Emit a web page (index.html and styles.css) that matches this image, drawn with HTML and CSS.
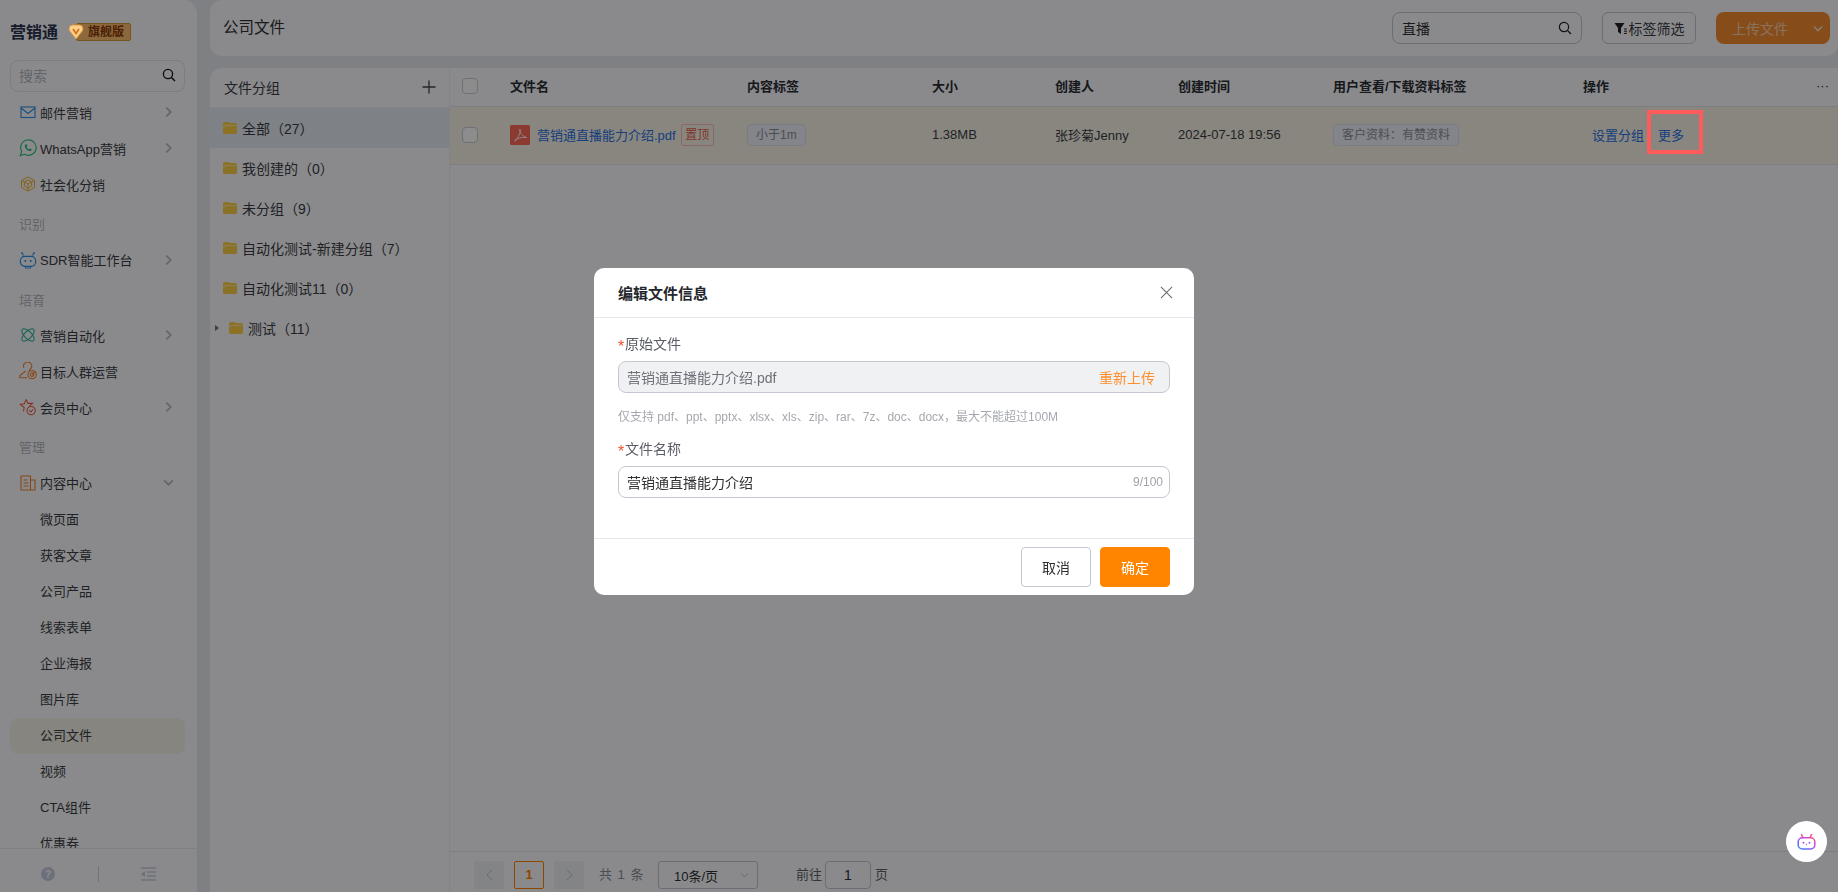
FILE: index.html
```html
<!DOCTYPE html>
<html lang="zh-CN">
<head>
<meta charset="utf-8">
<title>公司文件</title>
<link rel="stylesheet" href="styles.css">
</head>
<body>
<div class="app">
  <aside class="sidebar">
    <div class="brand">
      <span class="brand-name">营销通</span>
      <span class="badge">
        <svg class="badge-icon" viewBox="0 0 16 16"><path d="M1 5 Q1 1 4.5 1 H11.5 Q15 1 15 5 Q15 6.5 13.5 8 L8 15 L2.5 8 Q1 6.5 1 5 Z" fill="#ffcf8c" stroke="#d9983f"/><path d="M5 5 L8 9.5 L11 5" fill="none" stroke="#d0741f" stroke-width="1.8"/></svg>
        <span class="badge-text">旗舰版</span>
      </span>
    </div>
    <div class="side-search">
      <span class="side-search-text">搜索</span>
      <svg class="ico-search" viewBox="0 0 14 14"><circle cx="6" cy="6" r="4.6" fill="none" stroke="#111" stroke-width="1.3"/><path d="M9.5 9.5 L13 13" stroke="#111" stroke-width="1.4"/></svg>
    </div>
    <nav class="menu">
      <a class="item">
        <svg class="ico" viewBox="0 0 16 16"><rect x="1" y="3" width="14" height="10.5" fill="none" stroke="#2a8fea" stroke-width="1.1"/><path d="M1 4 L8 9.5 L15 4" fill="none" stroke="#2a8fea" stroke-width="1.1"/></svg>
        <span class="label">邮件营销</span><svg class="chev" viewBox="0 0 8 12"><path d="M1.5 1 L6.5 6 L1.5 11" fill="none" stroke="#b4b8c4" stroke-width="2"/></svg>
      </a>
      <a class="item">
        <svg class="ico ico-big" viewBox="0 0 20 20"><path d="M1.5 18.5 L3 13.8 A8.6 8.6 0 1 1 6.2 17 Z" fill="none" stroke="#2fc27a" stroke-width="1.3"/><path d="M7 6 C6 7 6.2 9 8 11 C10 13 12.2 14 13.5 13 L14.2 11.8 L12.2 10.6 L11.2 11.5 C10 11 9 10 8.6 8.8 L9.4 7.8 L8.3 5.8 Z" fill="#2fc27a"/></svg>
        <span class="label">WhatsApp营销</span><svg class="chev" viewBox="0 0 8 12"><path d="M1.5 1 L6.5 6 L1.5 11" fill="none" stroke="#b4b8c4" stroke-width="2"/></svg>
      </a>
      <a class="item">
        <svg class="ico" viewBox="0 0 16 16"><path d="M8 1 L14.5 4.5 V11.5 L8 15 L1.5 11.5 V4.5 Z M8 4 L11.6 6 V10 L8 12 L4.4 10 V6 Z M1.5 4.5 L8 8 L14.5 4.5 M8 8 V15" fill="none" stroke="#f5b02e" stroke-width="1"/></svg>
        <span class="label">社会化分销</span>
      </a>
      <div class="section">识别</div>
      <a class="item">
        <svg class="ico ico-big" viewBox="0 0 20 20"><rect x="1.5" y="6" width="17" height="11" rx="5" fill="none" stroke="#2a8fea" stroke-width="1.3"/><path d="M5 5 L3.5 2.5 M15 5 L16.5 2.5" stroke="#2a8fea" stroke-width="1.3"/><circle cx="3.3" cy="2" r="1" fill="#2a8fea"/><circle cx="16.7" cy="2" r="1" fill="#2a8fea"/><circle cx="7" cy="11" r="1.1" fill="#2a8fea"/><circle cx="13" cy="11" r="1.1" fill="#2a8fea"/><path d="M7 17 V19 H13 V17" fill="none" stroke="#2a8fea"/></svg>
        <span class="label">SDR智能工作台</span><svg class="chev" viewBox="0 0 8 12"><path d="M1.5 1 L6.5 6 L1.5 11" fill="none" stroke="#b4b8c4" stroke-width="2"/></svg>
      </a>
      <div class="section">培育</div>
      <a class="item">
        <svg class="ico" viewBox="0 0 16 16"><g fill="none" stroke="#2fb59b" stroke-width="1.1"><ellipse cx="8" cy="8" rx="8" ry="3.6" transform="rotate(45 8 8)"/><ellipse cx="8" cy="8" rx="8" ry="3.6" transform="rotate(-45 8 8)"/></g></svg>
        <span class="label">营销自动化</span><svg class="chev" viewBox="0 0 8 12"><path d="M1.5 1 L6.5 6 L1.5 11" fill="none" stroke="#b4b8c4" stroke-width="2"/></svg>
      </a>
      <a class="item">
        <svg class="ico ico-big" viewBox="0 0 20 20"><g fill="none" stroke="#f0822d" stroke-width="1.2"><path d="M5.5 6.5 A4.5 4.5 0 1 1 12.5 8 L11 10.5 M7.5 10 L1 15 V17.5 H9"/><circle cx="14.5" cy="14" r="4.6"/><circle cx="14.5" cy="14" r="2"/><path d="M14.5 14 L18 10.5"/></g></svg>
        <span class="label">目标人群运营</span>
      </a>
      <a class="item">
        <svg class="ico ico-big" viewBox="0 0 20 20"><g fill="none" stroke="#ee5a40" stroke-width="1.2"><path d="M8 1.5 L10 6 H15 L11.5 9 M5 15 L5.8 10.6 L1.5 7 L6 6.3 L8 1.5"/><circle cx="13.5" cy="14" r="4.6"/><path d="M11.3 13.6 L13.2 15.6 L15.8 12.5"/></g></svg>
        <span class="label">会员中心</span><svg class="chev" viewBox="0 0 8 12"><path d="M1.5 1 L6.5 6 L1.5 11" fill="none" stroke="#b4b8c4" stroke-width="2"/></svg>
      </a>
      <div class="section">管理</div>
      <a class="item">
        <svg class="ico" viewBox="0 0 16 16"><g fill="none" stroke="#f0822d" stroke-width="1.1"><path d="M1 1 H10.5 V15 H1 Z M10.5 5 H15 V15 H10.5"/><path d="M3.5 5 H7.5 M3.5 8 H8.5 M3.5 11 H8.5"/></g></svg>
        <span class="label">内容中心</span><svg class="chev chev-down" viewBox="0 0 12 8"><path d="M1 1.5 L6 6.5 L11 1.5" fill="none" stroke="#b4b8c4" stroke-width="2"/></svg>
      </a>
      <a class="item sub">微页面</a>
      <a class="item sub">获客文章</a>
      <a class="item sub">公司产品</a>
      <a class="item sub">线索表单</a>
      <a class="item sub">企业海报</a>
      <a class="item sub">图片库</a>
      <a class="item sub current">公司文件</a>
      <a class="item sub">视频</a>
      <a class="item sub">CTA组件</a>
      <a class="item sub">优惠券</a>
    </nav>
    <div class="side-foot">
      <svg class="foot-help" viewBox="0 0 14 14"><circle cx="7" cy="7" r="7" fill="#c7cde0"/><text x="7" y="11" text-anchor="middle" class="foot-q">?</text></svg>
      <span class="foot-sep"></span>
      <svg class="foot-fold" viewBox="0 0 15 14"><path d="M0 1 H15 M6 5 H15 M6 9 H15 M0 13 H15" stroke="#c7cde0" stroke-width="1.6"/><path d="M4 4 V10 L0 7 Z" fill="#c7cde0"/></svg>
    </div>
  </aside>

  <main class="main">
    <header class="topbar">
      <h1 class="title">公司文件</h1>
      <div class="top-actions">
        <div class="top-search">
          <span>直播</span>
          <svg class="ico-search" viewBox="0 0 14 14"><circle cx="6" cy="6" r="4.6" fill="none" stroke="#222" stroke-width="1.2"/><path d="M9.5 9.5 L13 13" stroke="#222" stroke-width="1.3"/></svg>
        </div>
        <button class="filter-btn">
          <svg class="filter-ico" viewBox="0 0 14 13"><path d="M0.5 1 H10.5 L7 6 V12 L4 10 V6 Z" fill="#222"/><path d="M10 7 H13 M10 9.2 H13 M10 11.4 H13" stroke="#222"/></svg>
          标签筛选
        </button>
        <button class="upload-btn">
          <span>上传文件</span>
          <svg class="upload-chev" viewBox="0 0 12 8"><path d="M1 1.5 L6 6.5 L11 1.5" fill="none" stroke="#fff" stroke-width="1.8"/></svg>
        </button>
      </div>
    </header>

    <section class="panel">
      <div class="groups">
        <div class="groups-head">
          <span>文件分组</span>
          <svg class="plus" viewBox="0 0 14 14"><path d="M7 0.5 V13.5 M0.5 7 H13.5" stroke="#444" stroke-width="1.3"/></svg>
        </div>
        <div class="group active"><svg class="folder" viewBox="0 0 14 12"><path d="M0 2 Q0 0 2 0 H5.5 L7 1 H12.5 Q14 1 14 2.5 V10.5 Q14 12 12.5 12 H1.5 Q0 12 0 10.5 Z" fill="#ffcf45"/><path d="M1 6 V4.5 Q1 3.5 2 3.5 H13.5" fill="none" stroke="#ffe9a8"/></svg>全部（27）</div>
        <div class="group"><svg class="folder" viewBox="0 0 14 12"><path d="M0 2 Q0 0 2 0 H5.5 L7 1 H12.5 Q14 1 14 2.5 V10.5 Q14 12 12.5 12 H1.5 Q0 12 0 10.5 Z" fill="#ffcf45"/><path d="M1 6 V4.5 Q1 3.5 2 3.5 H13.5" fill="none" stroke="#ffe9a8"/></svg>我创建的（0）</div>
        <div class="group"><svg class="folder" viewBox="0 0 14 12"><path d="M0 2 Q0 0 2 0 H5.5 L7 1 H12.5 Q14 1 14 2.5 V10.5 Q14 12 12.5 12 H1.5 Q0 12 0 10.5 Z" fill="#ffcf45"/><path d="M1 6 V4.5 Q1 3.5 2 3.5 H13.5" fill="none" stroke="#ffe9a8"/></svg>未分组（9）</div>
        <div class="group"><svg class="folder" viewBox="0 0 14 12"><path d="M0 2 Q0 0 2 0 H5.5 L7 1 H12.5 Q14 1 14 2.5 V10.5 Q14 12 12.5 12 H1.5 Q0 12 0 10.5 Z" fill="#ffcf45"/><path d="M1 6 V4.5 Q1 3.5 2 3.5 H13.5" fill="none" stroke="#ffe9a8"/></svg>自动化测试-新建分组（7）</div>
        <div class="group"><svg class="folder" viewBox="0 0 14 12"><path d="M0 2 Q0 0 2 0 H5.5 L7 1 H12.5 Q14 1 14 2.5 V10.5 Q14 12 12.5 12 H1.5 Q0 12 0 10.5 Z" fill="#ffcf45"/><path d="M1 6 V4.5 Q1 3.5 2 3.5 H13.5" fill="none" stroke="#ffe9a8"/></svg>自动化测试11（0）</div>
        <div class="group nested"><span class="caret"></span><svg class="folder" viewBox="0 0 14 12"><path d="M0 2 Q0 0 2 0 H5.5 L7 1 H12.5 Q14 1 14 2.5 V10.5 Q14 12 12.5 12 H1.5 Q0 12 0 10.5 Z" fill="#ffcf45"/><path d="M1 6 V4.5 Q1 3.5 2 3.5 H13.5" fill="none" stroke="#ffe9a8"/></svg>测试（11）</div>
      </div>

      <div class="table-wrap">
        <div class="table">
          <div class="row head">
            <div class="cell"><span class="check"></span></div>
            <div class="cell">文件名</div>
            <div class="cell">内容标签</div>
            <div class="cell">大小</div>
            <div class="cell">创建人</div>
            <div class="cell">创建时间</div>
            <div class="cell">用户查看/下载资料标签</div>
            <div class="cell">操作</div>
            <div class="cell dots">···</div>
          </div>
          <div class="row body">
            <div class="cell"><span class="check"></span></div>
            <div class="cell file">
              <svg class="pdf" viewBox="0 0 20 20"><rect width="20" height="20" rx="1.5" fill="#ff6a5a"/><path d="M10 4 C10.5 8 9 12 4.5 16 M10 4 C9.5 8 12.5 11.5 16.5 12.5 M4.5 16 C7.5 13 12 12 16.5 12.5" fill="none" stroke="#fff" stroke-width=".9"/></svg>
              <span class="file-name">营销通直播能力介绍.pdf</span>
              <span class="pin">置顶</span>
            </div>
            <div class="cell"><span class="tag">小于1m</span></div>
            <div class="cell">1.38MB</div>
            <div class="cell">张珍菊Jenny</div>
            <div class="cell">2024-07-18 19:56</div>
            <div class="cell"><span class="tag">客户资料：有赞资料</span></div>
            <div class="cell ops"><span>设置分组</span><span>更多</span></div>
            <div class="cell"></div>
          </div>
        </div>
        <div class="pager">
          <span class="page-nav"><svg viewBox="0 0 7 12"><path d="M6 1 L1 6 L6 11" fill="none" stroke="#c0c4cc"/></svg></span>
          <span class="page-cur">1</span>
          <span class="page-nav"><svg viewBox="0 0 7 12"><path d="M1 1 L6 6 L1 11" fill="none" stroke="#c0c4cc"/></svg></span>
          <span class="page-total">共 1 条</span>
          <span class="page-size">10条/页<svg viewBox="0 0 10 6"><path d="M1 1 L5 5 L9 1" fill="none" stroke="#b0b4bc"/></svg></span>
          <span class="page-goto">前往</span>
          <span class="page-input">1</span>
          <span class="page-unit">页</span>
        </div>
      </div>
    </section>
  </main>
</div>

<div class="mask"></div>
<div class="annot"></div>

<div class="modal">
  <div class="modal-head">
    <span class="modal-title">编辑文件信息</span>
    <svg class="close" viewBox="0 0 14 14"><path d="M1 1 L13 13 M13 1 L1 13" stroke="#666" stroke-width="1.1"/></svg>
  </div>
  <div class="modal-body">
    <div class="field-label"><i>*</i>原始文件</div>
    <div class="input disabled"><span>营销通直播能力介绍.pdf</span><span class="reupload">重新上传</span></div>
    <div class="hint">仅支持 pdf、ppt、pptx、xlsx、xls、zip、rar、7z、doc、docx，最大不能超过100M</div>
    <div class="field-label"><i>*</i>文件名称</div>
    <div class="input"><span>营销通直播能力介绍</span><span class="count">9/100</span></div>
  </div>
  <div class="modal-foot">
    <button class="btn">取消</button>
    <button class="btn primary">确定</button>
  </div>
</div>

<div class="bot">
  <svg viewBox="0 0 20 18">
    <defs><linearGradient id="g" x1="0" y1="1" x2="1" y2="0"><stop offset="0" stop-color="#2b8cff"/><stop offset=".5" stop-color="#a44dff"/><stop offset="1" stop-color="#ff4d8d"/></linearGradient></defs>
    <rect x="1.2" y="5" width="17.6" height="12" rx="4.5" fill="none" stroke="url(#g)" stroke-width="1.6"/>
    <path d="M6 4.5 L4.5 1 M14 4.5 L15.5 1" stroke="#ff4d8d" stroke-width="1.6"/>
    <circle cx="6.8" cy="10.3" r="1" fill="#a44dff"/><circle cx="13.2" cy="10.3" r="1" fill="#a44dff"/>
    <circle cx="10" cy="12" r=".7" fill="#a44dff"/>
  </svg>
</div>
</body>
</html>
```
FILE: styles.css
```css
* { box-sizing: border-box; }
html, body { margin: 0; height: 100%; overflow: hidden; }
body {
  font-family: "Liberation Sans", "Noto Sans CJK SC", sans-serif;
  font-size: 13px;
  color: #303133;
  background: #e7eaef;
}
button { font-family: inherit; }
svg { display: block; flex: none; }

.app { display: flex; height: 892px; }

/* Sidebar */
.sidebar {
  width: 197px;
  height: 892px;
  flex: none;
  background: #fbfcff;
  border-radius: 0 14px 0 0;
  display: flex;
  flex-direction: column;
  overflow: hidden;
}
.brand {
  height: 60px;
  padding: 1px 0 0 10px;
  display: flex;
  align-items: center;
  gap: 10px;
  flex: none;
}
.brand-name { font-size: 16px; font-weight: 700; color: #2a3350; }
.badge { display: flex; align-items: center; margin-top: 3px; }
.badge-icon { width: 16px; height: 16px; margin-right: -8px; position: relative; z-index: 1; }
.badge-text {
  font-size: 12px;
  font-weight: 700;
  line-height: 16px;
  color: #8c3a0c;
  background: #ffc070;
  border: 1px solid #d9983f;
  border-radius: 2px;
  width: 55px;
  padding-left: 11px;
}
.side-search {
  margin: 0 12px 0 10px;
  height: 32px;
  border: 1px solid #dfe3ec;
  border-radius: 8px;
  padding: 0 8px 2px;
  display: flex;
  align-items: center;
  justify-content: space-between;
  flex: none;
}
.side-search-text { font-size: 14px; color: #b3b7c2; }
.ico-search { width: 14px; height: 14px; }
.menu { flex: 1; min-height: 0; overflow: hidden; padding: 3px 12px 0 10px; }
.item {
  height: 36px;
  display: flex;
  align-items: center;
  padding: 0 0 2px 10px;
  color: #3a3d45;
  font-size: 13px;
  border-radius: 8px;
}
.ico { width: 16px; height: 16px; margin-right: 4px; }
.ico-big { width: 18px; height: 18px; margin: 0 3px 0 -1px; }
.label { flex: 1; }
.chev { width: 7px; height: 12px; margin-right: 13px; }
.chev-down { width: 11px; height: 7px; margin-right: 11px; }
.section {
  height: 39.5px;
  padding: 4px 0 0 9px;
  line-height: 35px;
  font-size: 13px;
  color: #b3b7c2;
}
.sub { padding-left: 30px; }
.current { background: #f6f3e8; }
.side-foot {
  height: 44px;
  flex: none;
  border-top: 1px solid #e6e9f0;
  display: flex;
  align-items: center;
  padding-top: 6px;
}
.foot-help { width: 14px; height: 14px; margin-left: 41px; }
.foot-q { font: 700 10px "Liberation Sans", sans-serif; fill: #fff; }
.foot-sep { width: 1px; height: 16px; background: #cfd3dc; margin-left: 43px; }
.foot-fold { width: 15px; height: 14px; margin-left: 42px; }

/* Main */
.main { flex: 1; min-width: 0; padding-left: 13px; display: flex; flex-direction: column; gap: 12px; }
.topbar {
  height: 56px;
  flex: none;
  background: #fbfcff;
  border-radius: 12px 0 12px 12px;
  display: flex;
  align-items: center;
  justify-content: space-between;
  padding: 0 8px 0 13px;
}
.title { margin: 0 0 4px; font-size: 15.5px; font-weight: 400; color: #303133; }
.top-actions { display: flex; gap: 20px; }
.top-search {
  width: 190px;
  height: 32px;
  border: 1px solid #c3c7d0;
  border-radius: 8px;
  padding: 0 9px;
  display: flex;
  align-items: center;
  justify-content: space-between;
  font-size: 14px;
}
.filter-btn {
  width: 94px;
  height: 32px;
  border: 1px solid #c3c7d0;
  border-radius: 6px;
  background: none;
  font-size: 14px;
  color: #3a3d45;
  display: flex;
  align-items: center;
  justify-content: center;
  gap: 1px;
  padding: 0;
}
.filter-ico { width: 14px; height: 13px; }
.upload-btn {
  width: 114px;
  height: 32px;
  border: 0;
  border-radius: 8px;
  background: #f58c30;
  color: #fff;
  font-size: 14px;
  display: flex;
  align-items: center;
  padding: 0 0 0 16px;
}
.upload-btn span { opacity: .6; }
.upload-chev { width: 10px; height: 7px; margin-left: 25px; opacity: .75; }

.panel { flex: 1; min-height: 0; display: flex; background: #fbfcff; border-radius: 12px 0 0 0; overflow: hidden; }
.groups { width: 240px; flex: none; border-right: 1px solid #eceef3; }
.groups-head {
  height: 40px;
  display: flex;
  align-items: center;
  justify-content: space-between;
  padding: 0 13px 2px 14px;
  border-bottom: 1px solid #eef0f5;
  font-size: 14px;
  color: #3a3d45;
}
.plus { width: 14px; height: 14px; }
.group {
  height: 40px;
  display: flex;
  align-items: center;
  padding-left: 13px;
  font-size: 14px;
  color: #3a3d45;
  gap: 5px;
}
.active { background: #e6ebf3; }
.nested { padding-left: 5px; }
.caret {
  width: 0; height: 0;
  border-left: 4px solid #6e7480;
  border-top: 3.5px solid transparent;
  border-bottom: 3.5px solid transparent;
  margin-right: 5px;
}
.folder { width: 14px; height: 12px; }

.table-wrap { flex: 1; min-width: 0; display: flex; flex-direction: column; }
.table { flex: 1; }
.row {
  display: grid;
  grid-template-columns: 60px 237px 185px 123px 123px 155px 250px 1fr 60px;
  align-items: center;
  border-bottom: 1px solid #e3e6ed;
}
.head { height: 39px; font-weight: 700; color: #2b2e36; padding-bottom: 3px; }
.body { height: 58px; background: #f8f5e8; color: #3a3d45; padding-bottom: 2px; }
.cell { white-space: nowrap; }
.head .cell:first-child, .body .cell:first-child { padding-left: 12px; }
.check { display: block; width: 16px; height: 16px; border: 1px solid #c8ccd6; border-radius: 4px; background: #fff; }
.dots { text-align: right; padding-right: 9px; font-weight: 400; }
.file { display: flex; align-items: center; gap: 7px; }
.pdf { width: 20px; height: 20px; }
.file-name { color: #2c72e5; margin-right: -2px; }
.pin {
  border: 1px solid #f9bcbc;
  color: #e8604f;
  font-size: 12px;
  height: 22px;
  line-height: 20px;
  padding: 0 3.5px;
  border-radius: 2px;
}
.tag {
  display: inline-block;
  height: 22px;
  line-height: 20px;
  border: 1px solid #dde2ee;
  background: #eff2fb;
  border-radius: 4px;
  padding: 0 8px;
  font-size: 12px;
  color: #8a8e99;
  vertical-align: middle;
}
.ops { display: flex; gap: 14px; margin-left: 9px; color: #2c72e5; }

.pager {
  height: 41px;
  flex: none;
  border-top: 1px solid #e3e6ed;
  padding: 9px 0 0 24px;
  display: flex;
  align-items: flex-start;
  font-size: 13px;
  color: #8a8e99;
}
.page-nav {
  width: 30px;
  height: 28px;
  background: #eef0f5;
  border-radius: 2px;
  display: flex;
  align-items: center;
  justify-content: center;
}
.page-nav svg { width: 7px; height: 12px; }
.page-cur {
  width: 30px;
  height: 28px;
  margin: 0 10px;
  border: 1px solid #ff8400;
  border-radius: 2px;
  color: #ff8400;
  font-weight: 700;
  text-align: center;
  line-height: 26px;
}
.page-total { margin-left: 15px; width: 59px; line-height: 28px; letter-spacing: 1px; }
.page-size {
  width: 100px;
  height: 28px;
  border: 1px solid #c3c7d0;
  border-radius: 3px;
  color: #303133;
  padding: 0 8px 0 15px;
  display: flex;
  align-items: center;
  justify-content: space-between;
}
.page-size svg { width: 9px; height: 6px; }
.page-goto { margin-left: 38px; line-height: 28px; color: #5e6168; width: 29px; }
.page-input {
  width: 46px;
  height: 28px;
  border: 1px solid #c3c7d0;
  border-radius: 4px;
  text-align: center;
  line-height: 26px;
  color: #303133;
  font-size: 14px;
}
.page-unit { margin-left: 4px; line-height: 28px; color: #5e6168; }

/* Overlays */
.mask { position: fixed; inset: 0; background: rgba(0, 0, 0, .45); }
.annot {
  position: fixed;
  left: 1647px;
  top: 110px;
  width: 56px;
  height: 44px;
  border: 4px solid #ff5b5b;
}
.modal {
  position: fixed;
  left: 594px;
  top: 268px;
  width: 600px;
  height: 327px;
  background: #fff;
  border-radius: 10px;
  display: flex;
  flex-direction: column;
}
.modal-head {
  height: 50px;
  flex: none;
  border-bottom: 1px solid #e6e8ee;
  display: flex;
  align-items: center;
  justify-content: space-between;
  padding: 0 21px 0 24px;
}
.modal-title { font-size: 15px; font-weight: 700; color: #25272e; }
.close { width: 13px; height: 13px; }
.modal-body { flex: 1; min-height: 0; padding: 16px 24px 0; }
.field-label { height: 20px; line-height: 20px; font-size: 14px; color: #5a5d66; }
.field-label i { display: inline-block; width: 7px; color: #f4532a; font-style: normal; font-size: 16px; line-height: 16px; vertical-align: -3px; }
.input {
  height: 32px;
  margin-top: 7px;
  border: 1px solid #c3c7d0;
  border-radius: 8px;
  padding: 0 8px;
  display: flex;
  align-items: center;
  justify-content: space-between;
  font-size: 14px;
  color: #303133;
}
.disabled { background: #f0f1f3; color: #6e7178; }
.reupload { color: #ff8f2e; margin-right: 6px; }
.count { font-size: 12px; color: #a0a3aa; margin-right: -2px; }
.hint { margin: 16px 0 14px; height: 16px; line-height: 16px; font-size: 12px; color: #a5a8ae; }
.modal-foot {
  height: 57px;
  flex: none;
  border-top: 1px solid #e6e8ee;
  display: flex;
  justify-content: flex-end;
  align-items: flex-start;
  gap: 9px;
  padding: 8px 24px 0 0;
}
.btn {
  width: 70px;
  height: 40px;
  border: 1px solid #c3c7d0;
  border-radius: 4px;
  background: #fff;
  font-size: 14px;
  color: #303133;
  padding: 0;
}
.primary { background: #ff8400; border-color: #ff8400; color: #fff; }
.bot {
  position: fixed;
  left: 1786px;
  top: 821px;
  width: 41px;
  height: 41px;
  border-radius: 50%;
  background: #fff;
  display: flex;
  align-items: center;
  justify-content: center;
}
.bot svg { width: 19px; height: 17px; }
```
